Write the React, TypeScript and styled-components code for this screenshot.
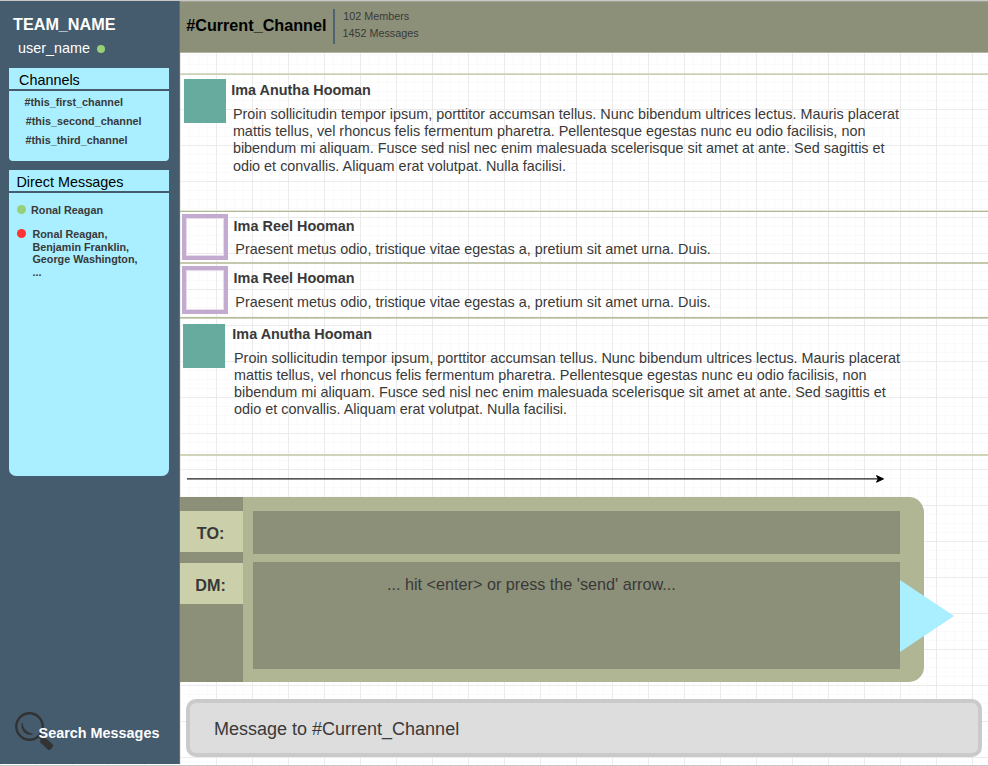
import React from "react";
import styled, { createGlobalStyle } from "styled-components";

const c = {
  slate: "#455b6e",
  cyan: "#a9efff",
  olive: "#8c9078",
  sage: "#b0b594",
  pale: "#cbd0ab",
  teal: "#67ab9f",
  lilac: "#c3abd0",
  ink: "#333333",
  green: "#97d077",
  red: "#ff3333",
};

const Global = createGlobalStyle`
  * { box-sizing: border-box; }
  body {
    margin: 0;
    overflow: hidden;
    background: #fff;
    font-family: "Liberation Sans", Arial, sans-serif;
    color: #393939;
  }
`;

const Page = styled.div`
  width: 988px;
  height: 766px;
  display: grid;
  grid-template-columns: 180px 808px;
  grid-template-rows: 764px;
  border-top: 1px solid #c8c8c8;
  border-bottom: 1px solid #c8c8c8;
  background-color: #fff;
  background-image:
    linear-gradient(to right, #ebebeb 1px, transparent 1px),
    linear-gradient(to bottom, #ebebeb 1px, transparent 1px),
    linear-gradient(to right, #fafafa 1px, transparent 1px),
    linear-gradient(to bottom, #fafafa 1px, transparent 1px);
  background-size: 36px 36px, 36px 36px, 9px 9px, 9px 9px;
`;

const Sidebar = styled.aside`
  height: 763px;
  background: ${c.slate};
  display: flex;
  flex-direction: column;
  padding: 14px 10px 0 9px;
  box-shadow: inset -1px 0 0 #5b6e7e;
`;

const TeamName = styled.div`
  font: bold 16.2px/18px "Liberation Sans", sans-serif;
  color: #fff;
  padding-left: 4px;
`;

const UserName = styled.div`
  display: flex;
  align-items: center;
  gap: 7px;
  margin: 7px 0 12px;
  padding-left: 9px;
  font-size: 14.4px;
  line-height: 16px;
  color: #fff;

  > i {
    position: relative;
    top: 1px;
  }
`;

const Dot = styled.i<{ $color: string; $size: number }>`
  flex: none;
  width: ${(p) => p.$size}px;
  height: ${(p) => p.$size}px;
  border-radius: 50%;
  background: ${(p) => p.$color};
`;

const Card = styled.section<{ $height: number; $radius: number }>`
  height: ${(p) => p.$height}px;
  width: 160px;
  margin-bottom: 9px;
  background: ${c.cyan};
  border-radius: 0 0 ${(p) => p.$radius}px ${(p) => p.$radius}px;
`;

const CardTitle = styled.h2<{ $indent: number }>`
  margin: 0;
  height: 23px;
  padding: 4px 0 0 ${(p) => p.$indent}px;
  border-bottom: 2px solid ${c.slate};
  font-size: 14.4px;
  font-weight: normal;
  line-height: 16px;
  color: #000;
`;

const ChannelList = styled.div`
  display: flex;
  flex-direction: column;
  gap: 7px;
  padding-top: 5px;
  font: bold 10.8px/12px "Liberation Sans", sans-serif;
`;

const Channel = styled.span<{ $indent: number }>`
  padding-left: ${(p) => p.$indent}px;
`;

const Person = styled.div<{ $top: number; $gap: number }>`
  display: flex;
  align-items: flex-start;
  gap: ${(p) => p.$gap}px;
  padding: ${(p) => p.$top}px 0 0 8px;
  font: bold 10.8px/12.6px "Liberation Sans", sans-serif;
  white-space: pre-line;

  > ${Dot} {
    margin-top: 1px;
  }
`;

const Search = styled.div`
  display: flex;
  align-items: flex-start;
  margin-top: auto;
  height: 53px;
  padding-left: 5px;
  font: bold 14.4px/16px "Liberation Sans", sans-serif;
  color: #fff;
  white-space: nowrap;
`;

const SearchIcon = styled.svg`
  flex: none;
  width: 40px;
  height: 40px;
  margin-right: -15.4px;
`;

const SearchLabel = styled.span`
  padding-top: 14px;
  z-index: 1;
`;

const Main = styled.main`
  display: flex;
  flex-direction: column;
`;

const Header = styled.header`
  height: 52px;
  display: flex;
  align-items: flex-start;
  background: ${c.olive};
  border-bottom: 1px solid #b4b7a5;
  border-top: 1px solid #a0a391;
`;

const ChannelName = styled.h1`
  margin: 0;
  padding: 14px 0 0 6.2px;
  width: 153px;
  font-size: 16.2px;
  line-height: 18px;
  color: #000;
`;

const HeaderRule = styled.div`
  width: 2px;
  height: 35px;
  margin-top: 7px;
  background: #4f6273;
`;

const Stats = styled.div`
  display: flex;
  flex-direction: column;
  gap: 5px;
  padding: 8px 0 0 7.4px;
  font-size: 10.8px;
  line-height: 12px;
`;

const Stat = styled.span<{ $indent?: number }>`
  padding-left: ${(p) => p.$indent ?? 0}px;
`;

const Feed = styled.div`
  margin-top: 20px;
  height: 383px;
  border-bottom: 2px solid #d0d4bb;
`;

const Message = styled.article<{ $height: number; $line: [string, string] }>`
  display: flex;
  align-items: flex-start;
  height: ${(p) => p.$height}px;
  padding-top: 2px;
  background:
    linear-gradient(${(p) => p.$line[0]} 0 0) 0 0 / 100% 1px no-repeat,
    linear-gradient(${(p) => p.$line[1]} 0 0) 0 1px / 100% 1px no-repeat;
`;

const Avatar = styled.div<{ $open?: boolean; $left: number; $top: number; $w: number; $h: number }>`
  flex: none;
  margin: ${(p) => p.$top}px 0 0 ${(p) => p.$left}px;
  width: ${(p) => p.$w}px;
  height: ${(p) => p.$h}px;
  background: ${(p) => (p.$open ? "transparent" : c.teal)};
  border: ${(p) => (p.$open ? `4px solid ${c.lilac}` : "none")};
  box-shadow: ${(p) => (p.$open ? "inset 0 0 0 1px #e6dcec" : "none")};
`;

const Content = styled.div<{ $left: number; $top: number }>`
  padding: ${(p) => p.$top}px 0 0 ${(p) => p.$left}px;
`;

const Author = styled.div`
  font: bold 14.4px/16px "Liberation Sans", sans-serif;
  letter-spacing: 0.02px;
`;

const Body = styled.p<{ $top: number }>`
  margin: ${(p) => p.$top}px 0 0;
  padding-left: 1.7px;
  font-size: 14.4px;
  line-height: 17.2px;
  letter-spacing: 0.006px;
  white-space: pre;
`;

const ArrowLine = styled.svg`
  display: block;
  width: 700px;
  height: 12px;
  margin: 17px 0 12px 6px;
`;

const Composer = styled.section`
  display: flex;
  width: 744px;
  height: 185px;
  background: ${c.sage};
  border-radius: 0 15px 15px 0;
`;

const Labels = styled.div`
  flex: none;
  width: 63px;
  padding-top: 14px;
  display: flex;
  flex-direction: column;
  gap: 11px;
  background: ${c.olive};
`;

const Label = styled.label`
  height: 41px;
  padding: 13px 1.8px 0 0;
  background: ${c.pale};
  text-align: center;
  font: bold 16.2px/18px "Liberation Sans", sans-serif;
`;

const Fields = styled.div`
  flex: none;
  width: 647px;
  margin-left: 10px;
  padding-top: 14px;
  display: flex;
  flex-direction: column;
  gap: 8px;
`;

const Field = styled.div<{ $height: number }>`
  height: ${(p) => p.$height}px;
  padding: 13px 0 0 134px;
  background: ${c.olive};
  font-size: 16.2px;
  line-height: 18px;
`;

const Send = styled.svg`
  flex: none;
  width: 54px;
  height: 72px;
  margin-top: 83px;
`;

const MessageBox = styled.div`
  width: 796px;
  height: 58px;
  margin: 17px 0 0 6px;
  padding: 16px 0 0 24px;
  border: 4px solid #cacaca;
  border-radius: 10px;
  background: #ddd;
  font-size: 18px;
  line-height: 20px;
`;

const lorem = `Proin sollicitudin tempor ipsum, porttitor accumsan tellus. Nunc bibendum ultrices lectus. Mauris placerat
mattis tellus, vel rhoncus felis fermentum pharetra. Pellentesque egestas nunc eu odio facilisis, non
bibendum mi aliquam. Fusce sed nisl nec enim malesuada scelerisque sit amet at ante. Sed sagittis et
odio et convallis. Aliquam erat volutpat. Nulla facilisi.`;
const short = "Praesent metus odio, tristique vitae egestas a, pretium sit amet urna. Duis.";

export default function App() {
  return (
    <>
      <Global />
      <Page>
        <Sidebar>
          <TeamName>TEAM_NAME</TeamName>
          <UserName>
            user_name <Dot $color={c.green} $size={8} />
          </UserName>
          <Card $height={93} $radius={4}>
            <CardTitle $indent={10}>Channels</CardTitle>
            <ChannelList>
              <Channel $indent={15.5}>#this_first_channel</Channel>
              <Channel $indent={16.7}>#this_second_channel</Channel>
              <Channel $indent={16.5}>#this_third_channel</Channel>
            </ChannelList>
          </Card>
          <Card $height={306} $radius={7}>
            <CardTitle $indent={7.4}>Direct Messages</CardTitle>
            <Person $top={11} $gap={5}>
              <Dot $color={c.green} $size={9} />
              Ronal Reagan
            </Person>
            <Person $top={11.4} $gap={6.4}>
              <Dot $color={c.red} $size={9} />
              {"Ronal Reagan,\nBenjamin Franklin,\nGeorge Washington,\n..."}
            </Person>
          </Card>
          <Search>
            <SearchIcon viewBox="0 0 40 40" fill="none" stroke={c.ink}>
              <circle cx="15.500" cy="15.500" r="13.200" strokeWidth="2.400" />
              <path d="M8 12c1 5.500 4.500 9.800 10.500 11C12.500 25 6.500 20 8 12z" fill={c.ink} strokeWidth=".6" />
              <path d="M27.500 28.500l2.500-2.500 8.500 7.800q.8.900 0 1.900l-2.400 2.600q-1 .8-2 0l-8-7.500z" fill={c.ink} strokeWidth="1" />
              <path d="M24.500 24.500l4 4" strokeWidth="3" />
            </SearchIcon>
            <SearchLabel>Search Messages</SearchLabel>
          </Search>
        </Sidebar>
        <Main>
          <Header>
            <ChannelName>#Current_Channel</ChannelName>
            <HeaderRule />
            <Stats>
              <Stat $indent={0.8}>102 Members</Stat>
              <Stat>1452 Messages</Stat>
            </Stats>
          </Header>
          <Feed>
            <Message $height={137} $line={["#d9dcc8", "#cbcfb5"]}>
              <Avatar $left={4} $top={4} $w={42} $h={44} />
              <Content $left={5.2} $top={7}>
                <Author>Ima Anutha Hooman</Author>
                <Body $top={7.9}>{lorem}</Body>
              </Content>
            </Message>
            <Message $height={52} $line={["#e3e6d8", "#b3b898"]}>
              <Avatar $open $left={2} $top={2} $w={46} $h={46} />
              <Content $left={5.6} $top={6}>
                <Author>Ima Reel Hooman</Author>
                <Body $top={6.5}>{short}</Body>
              </Content>
            </Message>
            <Message $height={55} $line={["#c4c8ad", "#c4c8ad"]}>
              <Avatar $open $left={2} $top={2} $w={46} $h={48} />
              <Content $left={5.6} $top={6}>
                <Author>Ima Reel Hooman</Author>
                <Body $top={7.5}>{short}</Body>
              </Content>
            </Message>
            <Message $height={137} $line={["#b5ba9a", "#cfd3bb"]}>
              <Avatar $left={3} $top={5} $w={42} $h={44} />
              <Content $left={7.3} $top={7}>
                <Author>Ima Anutha Hooman</Author>
                <Body $top={7.5}>{lorem}</Body>
              </Content>
            </Message>
          </Feed>
          <ArrowLine viewBox="0 0 700 12">
            <path d="M1 5.900h692" stroke="#222" strokeWidth="1.200" />
            <path d="M697.500 5.900l-7-3.300L692.300 5.900 690.500 9.200z" fill="#000" stroke="#000" />
          </ArrowLine>
          <Composer>
            <Labels>
              <Label>TO:</Label>
              <Label>DM:</Label>
            </Labels>
            <Fields>
              <Field $height={43} />
              <Field $height={107}>... hit &lt;enter&gt; or press the 'send' arrow...</Field>
            </Fields>
            <Send viewBox="0 0 54 72">
              <path d="M0 0l54 36L0 72z" fill={c.cyan} />
            </Send>
          </Composer>
          <MessageBox>Message to #Current_Channel</MessageBox>
        </Main>
      </Page>
    </>
  );
}
